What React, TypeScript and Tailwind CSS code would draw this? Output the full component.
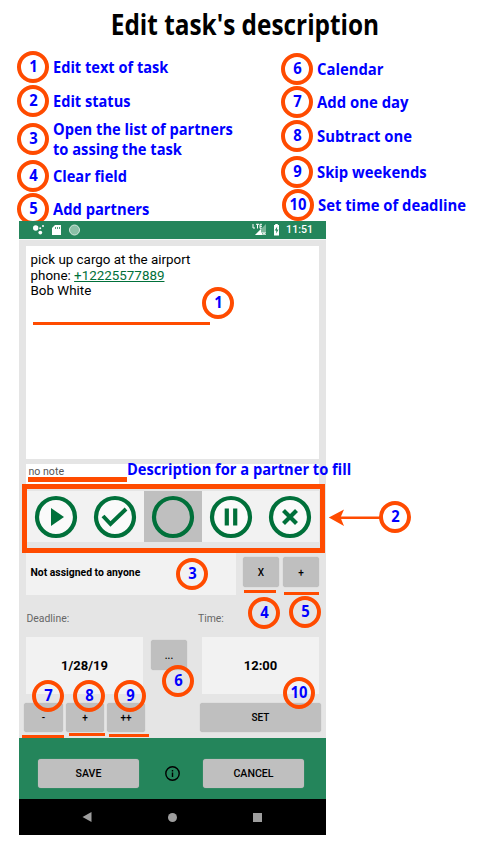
import type { ReactNode } from 'react';

const note = "font-['Open_Sans',sans-serif] font-bold text-[#0000ff] whitespace-nowrap";

function Ring({ n, className = '' }: { n: number; className?: string }) {
  return (
    <div className={`flex size-8 shrink-0 items-center justify-center rounded-full border-4 border-[#ff4b00] ${className}`}>
      <span className={`${note} scale-x-[0.95] text-[15.6px] leading-none`}>{n}</span>
    </div>
  );
}

function Item({ n, children, className = '', text = '' }: { n: number; children: ReactNode; className?: string; text?: string }) {
  return (
    <div className={`flex h-8 items-center gap-[3.5px] ${className}`}>
      <Ring n={n} />
      <div className={`${note} origin-left text-[15.6px] leading-5 ${text}`}>{children}</div>
    </div>
  );
}

function Btn({ children, className = '' }: { children: ReactNode; className?: string }) {
  return (
    <button className={`flex shrink-0 items-center justify-center rounded-[3px] bg-[#bfbfbf] font-medium text-black shadow-[0_0_1px_#aaa] ${className}`}>
      {children}
    </button>
  );
}

function StatusIcon({ children, active = false }: { children?: ReactNode; active?: boolean }) {
  return (
    <div className={`flex h-[51px] flex-1 items-center justify-center ${active ? 'bg-[#bfbfbf]' : 'bg-[#f2f2f2]'}`}>
      <svg width="44" height="44" viewBox="-22 -22 44 44" fill="none" stroke="#00703a">
        <circle r="19" fill={active ? 'none' : '#fafafa'} strokeWidth="4.2" />
        {children}
      </svg>
    </div>
  );
}

export default function App() {
  return (
    <div className="relative h-[850px] w-[500px] overflow-hidden bg-white font-[Roboto,sans-serif] text-black">
      <h1 className="flex h-[51px] items-center justify-center pb-[2px] pr-[11px] font-['Open_Sans',sans-serif] text-[28.5px] font-bold">
        <span className="scale-x-[0.855] whitespace-nowrap">Edit task's description</span>
      </h1>
      <div className="flex h-[170px] pl-[17px]">
        <div className="w-[264px]">
          <Item n={1} text="scale-x-[0.935]">Edit text of task</Item>
          <Item n={2} className="mt-[2px]" text="scale-x-[0.935]">Edit status</Item>
          <Item n={3} className="mt-[6px]" text="scale-x-[0.94]">Open the list of partners<br />to assing the task</Item>
          <Item n={4} className="mt-[5px]" text="scale-x-[0.935]">Clear field</Item>
          <Item n={5} className="mt-[1px]" text="scale-x-[0.945]">Add partners</Item>
        </div>
        <div className="pt-[2px]">
          <Item n={6} text="scale-x-[0.95]">Calendar</Item>
          <Item n={7} className="mt-[1px]" text="scale-x-[0.955]">Add one day</Item>
          <Item n={8} className="mt-[2px]" text="scale-x-[0.95]">Subtract one</Item>
          <Item n={9} className="mt-[4px]" text="scale-x-[0.95]">Skip weekends</Item>
          <Item n={10} className="mt-[1px] pl-[1px]" text="scale-x-[0.95]">Set time of deadline</Item>
        </div>
      </div>

      <div className="ml-[19px] flex h-[614px] w-[307px] flex-col bg-[#e5e5e5]">
        <div className="flex h-[18px] items-center bg-[#24855b] pl-[13px] pr-[13px] text-white">
          <svg width="50" height="14" viewBox="0 0 50 14" fill="white">
            <circle cx="3.7" cy="5" r="2.7" /><circle cx="8.3" cy="9.6" r="1.9" /><circle cx="8.2" cy="5.3" r="1" /><circle cx="11" cy="3" r="1" />
            <path d="M23 2h6v10h-9V5z" /><path d="M23.5 4v2M25.5 4v2M27.5 4v2" stroke="#24855b" strokeWidth=".8" />
            <circle cx="42.5" cy="7" r="5" fill="#8bc0a7" stroke="#d2e8dd" strokeWidth="1" />
          </svg>
          <svg className="ml-auto mr-[5px]" width="29" height="14" viewBox="0 0 29 14" fill="white">
            <path d="M1 1v4h2M4 1.3h3M5.5 1.3V5.5M10 1.3H8v4h2M8 3.3h2" fill="none" stroke="white" strokeWidth="1" />
            <path d="M3 12 14 1v11z" fill="#7ab699" /><path d="M3 12l6-6v3l1 1v2z" /><path d="m10.5 9 3 3m0-3-3 3" stroke="white" />
            <path d="M22 2h1.2V1h2.6v1H27v10.5h-5z" /><path d="m25.3 3.5-2.6 4h1.6v3l2.2-4h-1.6z" fill="#24855b" />
          </svg>
          <span className="text-[10.6px] font-medium">11:51</span>
        </div>
        <div className="h-[1px] bg-[#f5f5f5]" />
        <div className="ml-[7px] mt-[6px] h-[213px] w-[293px] bg-white pl-[4.5px] pt-[6px] text-[13.4px] leading-[15.6px]">
          <p>pick up cargo at the airport</p>
          <p>phone: <span className="text-[#00703a] underline decoration-1 underline-offset-1">+12225577889</span></p>
          <p>Bob White</p>
        </div>
        <div className="ml-[7px] mt-[5px] h-[20px] w-[293px] bg-white pl-[2.5px] text-[10.6px] leading-[15px] text-[#555]">no note</div>
        <div className="ml-[3px] flex h-[69px] w-[303px] items-start border-[5px] border-[#ff4b00] pr-[1px] pt-[2px]">
          <StatusIcon><path d="M-5-9 8 0-5 9z" fill="#00703a" stroke="none" /></StatusIcon>
          <StatusIcon><path d="m-12-1 7.5 8L11-8" strokeWidth="4" /></StatusIcon>
          <StatusIcon active />
          <StatusIcon><path d="M-4.2-8.5v17M4.2-8.5v17" strokeWidth="4.2" /></StatusIcon>
          <StatusIcon><path d="m-6.5-6.5 13 13m0-13-13 13" strokeWidth="4.2" /></StatusIcon>
        </div>
        <div className="ml-[7px] flex h-[42px]">
          <div className="flex w-[210px] items-center bg-[#f2f2f2] pb-[2px] pl-[4.5px] text-[10.4px] font-bold">Not assigned to anyone</div>
          <Btn className="ml-[7px] mt-[4px] h-[30px] w-[36px] text-[10px]">X</Btn>
          <Btn className="ml-[4px] mt-[4px] h-[30px] w-[36px] text-[10px]">+</Btn>
        </div>
        <div className="flex h-[42px] items-center pb-[1px] pt-[6px] pl-[7.5px] text-[10.4px] text-[#666]">
          <span className="w-[171.5px]">Deadline:</span><span>Time:</span>
        </div>
        <div className="ml-[7px] flex h-[57px] text-[13px] font-bold">
          <div className="flex w-[117px] items-center justify-center bg-[#f2f2f2]">1/28/19</div>
          <Btn className="ml-[8px] mt-[3px] h-[30px] w-[36px] text-[10px]">...</Btn>
          <div className="ml-[15px] flex w-[117px] items-center justify-center bg-[#f2f2f2]">12:00</div>
        </div>
        <div className="ml-[5px] mt-[9px] flex h-[35px] gap-[3px] text-[10px]">
          <Btn className="h-[29px] w-[39px]">-</Btn>
          <Btn className="h-[29px] w-[38px]">+</Btn>
          <Btn className="h-[29px] w-[38px]">++</Btn>
          <Btn className="ml-[52px] h-[29px] w-[121px]">SET</Btn>
        </div>
        <div className="flex h-[61px] items-center bg-[#24855b] pl-[19px] pt-[10px] text-[10.6px]">
          <Btn className="h-[29px] w-[101px]">SAVE</Btn>
          <svg className="ml-[26px] mr-[23px]" width="15" height="15" viewBox="0 0 15 15" fill="none" stroke="black" strokeWidth="1.4">
            <circle cx="7.5" cy="7.5" r="6.7" /><path d="M7.5 6.5V11M7.5 4v1.5" />
          </svg>
          <Btn className="h-[29px] w-[101px]">CANCEL</Btn>
        </div>
        <div className="flex h-[36px] items-center gap-[76px] bg-black pl-[63px]">
          <svg width="10" height="10"><path d="M9.5 0v10L.5 5z" fill="#9e9e9e" /></svg>
          <div className="size-[9px] rounded-full bg-[#9e9e9e]" />
          <div className="size-[9px] bg-[#9e9e9e]" />
        </div>
      </div>

      <div className={`${note} absolute left-[127px] top-[459px] origin-left scale-x-[0.94] text-[15.6px] leading-5`}>Description for a partner to fill</div>
      <div className="absolute left-[33px] top-[322px] h-[3px] w-[177px] bg-[#ff4b00]" />
      <div className="absolute left-[28px] top-[477px] h-[5px] w-[99px] bg-[#ff4b00]" />
      <div className="absolute left-[244px] top-[590px] h-[3px] w-[32px] bg-[#ff4b00]" />
      <div className="absolute left-[284px] top-[592px] h-[3px] w-[35px] bg-[#ff4b00]" />
      <div className="absolute left-[22px] top-[735px] h-[3px] w-[42px] bg-[#ff4b00]" />
      <div className="absolute left-[69px] top-[733px] h-[3px] w-[36px] bg-[#ff4b00]" />
      <div className="absolute left-[109px] top-[734px] h-[3px] w-[40px] bg-[#ff4b00]" />
      <svg className="absolute left-[328px] top-[508px]" width="54" height="18" viewBox="0 0 54 18">
        <path d="M12 9.8h40" stroke="#ff4b00" strokeWidth="2.6" /><path d="M.8 9.6 16 1.5l-3.5 8.1L16 18z" fill="#ff4b00" />
      </svg>
      <Ring n={1} className="absolute left-[202px] top-[287px]" />
      <Ring n={2} className="absolute left-[379px] top-[501px]" />
      <Ring n={3} className="absolute left-[176px] top-[558px]" />
      <Ring n={4} className="absolute left-[248px] top-[597px]" />
      <Ring n={5} className="absolute left-[289px] top-[596px]" />
      <Ring n={6} className="absolute left-[162px] top-[665px]" />
      <Ring n={7} className="absolute left-[32px] top-[680px]" />
      <Ring n={8} className="absolute left-[73px] top-[680px]" />
      <Ring n={9} className="absolute left-[114px] top-[680px]" />
      <Ring n={10} className="absolute left-[283px] top-[677px]" />
    </div>
  );
}
